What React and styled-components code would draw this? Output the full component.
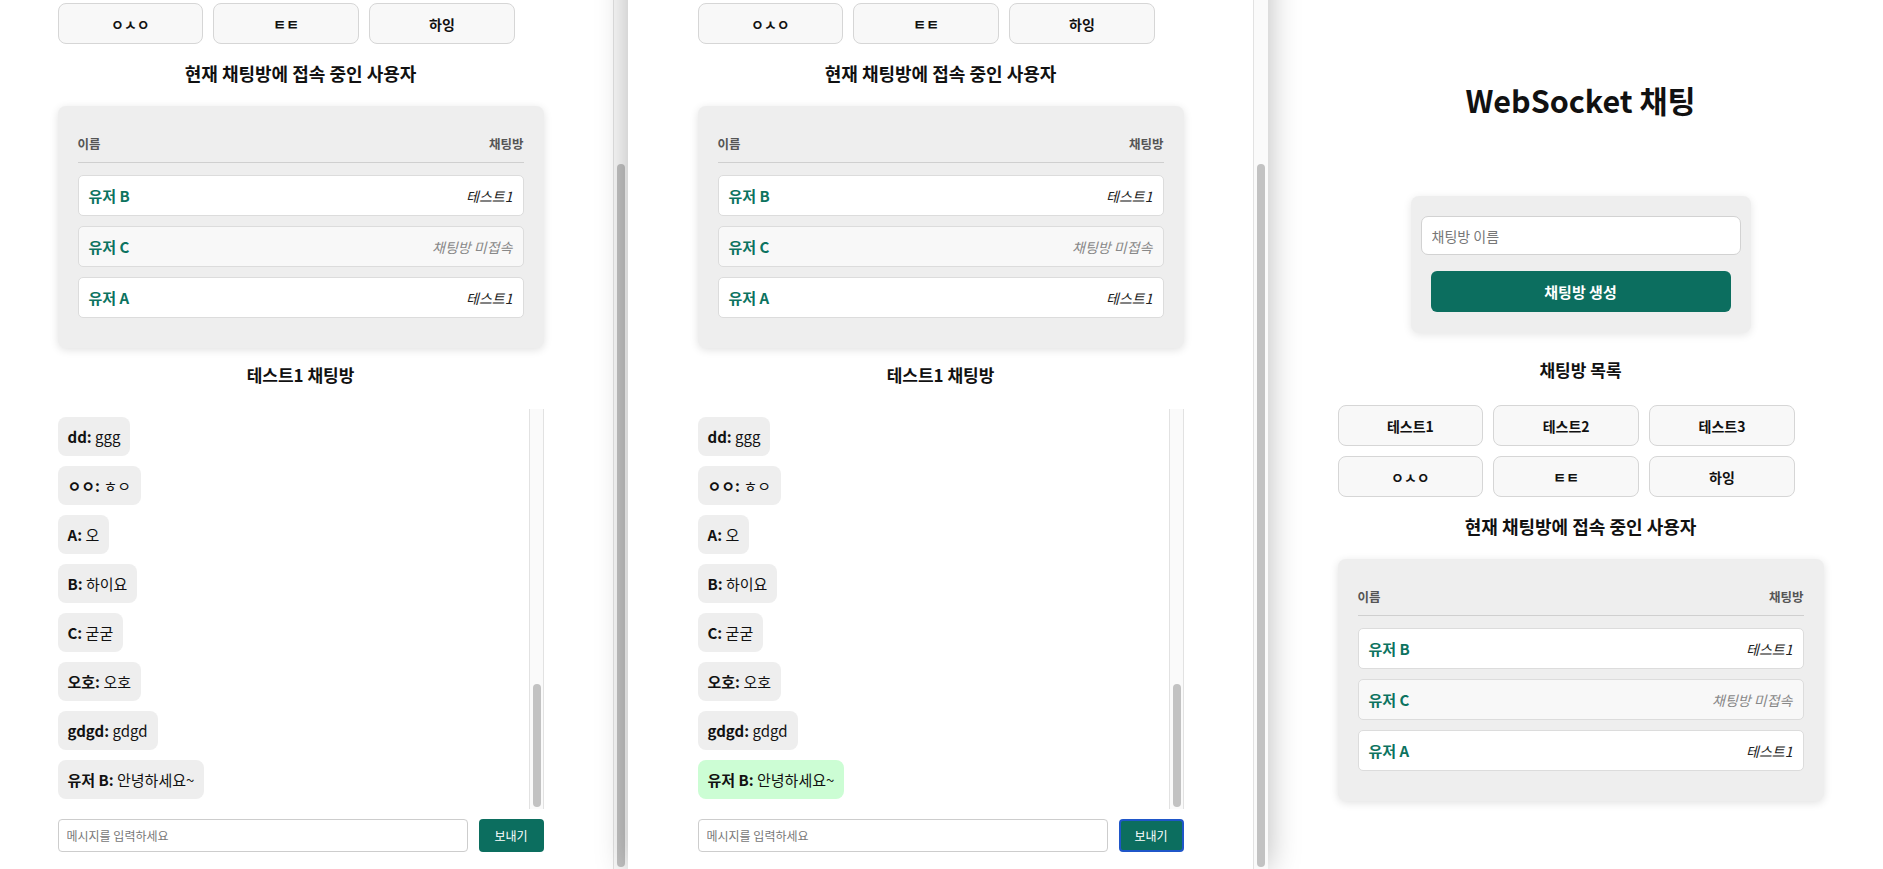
import React, { useLayoutEffect, useRef, useState } from "react";
import styled, { createGlobalStyle } from "styled-components";

const TEAL = "#0c6e5f";

const GlobalStyle = createGlobalStyle`
  html, body {
    margin: 0;
    padding: 0;
    overflow: hidden;
    background: #1c1c1e;
  }
  body {
    font-family: "Noto Sans CJK KR", "Noto Sans", sans-serif;
    color: #111;
  }
  * {
    box-sizing: border-box;
  }
`;

const Desktop = styled.div`
  display: flex;
  align-items: flex-start;
  width: calc(100% + 12px);
  height: 869px;
  margin-left: -12px;
  overflow: hidden;
`;

const WindowFrame = styled.section`
  position: relative;
  flex: 0 0 ${(p) => p.$width}px;
  height: ${(p) => p.$height}px;
  margin-top: ${(p) => p.$top}px;
  background: #fff;
  z-index: ${(p) => (p.$front ? 2 : 1)};
  box-shadow: ${(p) => (p.$front ? "0 0 30px rgba(0, 0, 0, 0.28)" : "none")};
  display: flex;
`;

/* scroll box with a mac style scrollbar rail next to it */
const ScrollBox = styled.div`
  display: flex;
  width: 100%;
  height: ${(p) => p.$height};
  flex-shrink: 0;
`;

const ScrollViewport = styled.div`
  flex: 1;
  min-width: 0;
  height: 100%;
  overflow-y: auto;
  overflow-x: hidden;
  scrollbar-width: none;
  &::-webkit-scrollbar {
    display: none;
  }
`;

const Rail = styled.div`
  position: relative;
  flex: 0 0 15px;
  height: 100%;
  background: #fafafa;
  border-left: 1px solid #e2e2e2;
  border-right: ${(p) => (p.$boxed ? "1px solid #e2e2e2" : "none")};
`;

const Thumb = styled.div`
  position: absolute;
  left: 3px;
  width: 8px;
  border-radius: 4px;
  background: #c2c2c2;
`;

const ScrollArea = ({ height, boxed, children }) => {
  const ref = useRef(null);
  const [thumb, setThumb] = useState(null);
  useLayoutEffect(() => {
    const el = ref.current;
    if (!el) return;
    const update = () => {
      el.scrollTop = el.scrollHeight;
      const { scrollTop, scrollHeight, clientHeight } = el;
      if (scrollHeight <= clientHeight) {
        setThumb(null);
        return;
      }
      setThumb({
        top: (scrollTop / scrollHeight) * clientHeight,
        height: (clientHeight * clientHeight) / scrollHeight,
      });
    };
    update();
    if (document.fonts) document.fonts.ready.then(update);
  }, []);
  return (
    <ScrollBox $height={height}>
      <ScrollViewport ref={ref}>{children}</ScrollViewport>
      <Rail $boxed={boxed}>
        {thumb && (
          <Thumb
            style={{ top: thumb.top + 1, height: Math.max(thumb.height - 3, 10) }}
          />
        )}
      </Rail>
    </ScrollBox>
  );
};

const Page = styled.main`
  width: 486px;
  margin: 0 auto;
  padding: 78px 0 17px;
  display: flex;
  flex-direction: column;
  align-items: center;
`;

const Title = styled.h1`
  margin: 0 0 74px;
  font-size: 30.5px;
  line-height: 44px;
  font-weight: 700;
`;

const CreateCard = styled.form`
  width: 340px;
  padding: 20px 10px 21px;
  background: #eee;
  border-radius: 8px;
  box-shadow: 0 2px 8px rgba(0, 0, 0, 0.1);
  display: flex;
  flex-direction: column;
  align-items: center;
  gap: 16px;
`;

const RoomNameInput = styled.input`
  width: 100%;
  height: 39px;
  padding: 0 10px;
  border: 1px solid #d2d2d2;
  border-radius: 7px;
  background: #fff;
  font: inherit;
  font-size: 14px;
  outline: none;
  &::placeholder {
    color: #777;
  }
`;

const CreateButton = styled.button`
  width: 300px;
  height: 41px;
  border: none;
  border-radius: 6px;
  background: ${TEAL};
  color: #fff;
  font: inherit;
  font-size: 15px;
  font-weight: 700;
`;

const Heading = styled.h2`
  margin: ${(p) => p.$margin};
  font-size: ${(p) => (p.$large ? 18 : 17)}px;
  line-height: ${(p) => (p.$large ? 28 : 24)}px;
  font-weight: 700;
  text-align: center;
`;

const RoomGrid = styled.div`
  width: 100%;
  display: flex;
  flex-wrap: wrap;
  gap: 10px;
`;

const RoomButton = styled.button`
  width: 30%;
  height: 41px;
  border: 1px solid #d6d6d6;
  border-radius: 8px;
  background: #f8f8f8;
  color: #111;
  font: inherit;
  font-size: 14px;
  font-weight: 700;
`;

const UserCard = styled.div`
  width: 100%;
  padding: 20px;
  background: #eee;
  border-radius: 8px;
  box-shadow: 0 2px 8px rgba(0, 0, 0, 0.12);
`;

const UserHeader = styled.div`
  display: flex;
  justify-content: space-between;
  padding: 8px 0;
  margin-bottom: 12px;
  border-bottom: 1px solid #cfcfcf;
  font-size: 12.5px;
  line-height: 20px;
  font-weight: 700;
  color: #555;
`;

const UserRow = styled.div`
  display: flex;
  justify-content: space-between;
  align-items: center;
  height: 41px;
  padding: 0 10px;
  margin-bottom: 10px;
  border: 1px solid #dcdcdc;
  border-radius: 5px;
  background: ${(p) => (p.$idle ? "#f8f8f8" : "#fff")};
`;

const UserName = styled.span`
  color: #0c7360;
  font-size: 15px;
  font-weight: 700;
`;

const UserRoom = styled.span`
  font-size: 14px;
  font-style: italic;
  color: ${(p) => (p.$idle ? "#888" : "#222")};
`;

const MessageStack = styled.div`
  display: flex;
  flex-direction: column;
  align-items: flex-start;
  gap: 10px;
  padding-bottom: 10px;
`;

const Bubble = styled.div`
  flex-shrink: 0;
  padding: 8px 10px;
  border-radius: 8px;
  background: ${(p) => (p.$mine ? "#ccfdd4" : "#eee")};
  font-size: 15px;
  line-height: 23px;
  strong {
    font-weight: 700;
  }
`;

const Composer = styled.form`
  width: 100%;
  margin-top: 10px;
  display: flex;
  gap: 11px;
`;

const MessageInput = styled.input`
  flex: 1;
  height: 33px;
  padding: 0 8px;
  border: 1px solid #cdcdcd;
  border-radius: 4px;
  font: inherit;
  font-size: 12px;
  outline: none;
  &::placeholder {
    color: #777;
  }
`;

const SendButton = styled.button`
  width: 65px;
  height: 33px;
  border: ${(p) => (p.$focused ? "2px solid #1f56c9" : "none")};
  border-radius: 4px;
  background: ${TEAL};
  color: #fff;
  font: inherit;
  font-size: 12px;
`;

const ROOMS = ["테스트1", "테스트2", "테스트3", "ㅇㅅㅇ", "ㅌㅌ", "하잉"];

const USERS = [
  { name: "유저 B", room: "테스트1" },
  { name: "유저 C", room: null },
  { name: "유저 A", room: "테스트1" },
];

const MESSAGES = [
  { from: "유저 A", text: "안녕하세요" },
  { from: "유저 C", text: "반가워요" },
  { from: "a", text: "aaa" },
  { from: "b", text: "bbb" },
  { from: "유저 A", text: "테스트" },
  { from: "test", text: "test" },
  { from: "ㅋㅋ", text: "ㅋㅋㅋ" },
  { from: "hi", text: "hello" },
  { from: "유저 C", text: "ㅎㅇ" },
  { from: "qwer", text: "asdf" },
  { from: "유저 A", text: "잘 되네요" },
  { from: "1", text: "11" },
  { from: "2", text: "22" },
  { from: "ㅁㅁ", text: "ㅁㅁㅁ" },
  { from: "zz", text: "zzz" },
  { from: "유저 C", text: "오오" },
  { from: "abc", text: "abc" },
  { from: "ㄴㄴ", text: "ㄴㄴ" },
  { from: "dd", text: "ggg" },
  { from: "ㅇㅇ", text: "ㅎㅇ" },
  { from: "A", text: "오" },
  { from: "B", text: "하이요" },
  { from: "C", text: "굳굳" },
  { from: "오호", text: "오호" },
  { from: "gdgd", text: "gdgd" },
  { from: "유저 B", text: "안녕하세요~" },
];

const ChatRoom = ({ me, focusSend }) => (
  <>
    <Heading $margin="15px 0 22px">테스트1 채팅방</Heading>
    <ScrollArea height="400px" boxed>
      <MessageStack>
        {MESSAGES.map((m, i) => (
          <Bubble key={i} $mine={m.from === me}>
            <strong>{m.from}:</strong> {m.text}
          </Bubble>
        ))}
      </MessageStack>
    </ScrollArea>
    <Composer onSubmit={(e) => e.preventDefault()}>
      <MessageInput placeholder="메시지를 입력하세요" />
      <SendButton type="submit" $focused={focusSend}>
        보내기
      </SendButton>
    </Composer>
  </>
);

const ChatApp = ({ inRoom, me, focusSend }) => (
  <Page>
    <Title>WebSocket 채팅</Title>
    <CreateCard onSubmit={(e) => e.preventDefault()}>
      <RoomNameInput placeholder="채팅방 이름" />
      <CreateButton type="submit">채팅방 생성</CreateButton>
    </CreateCard>
    <Heading $margin="25px 0 23px">채팅방 목록</Heading>
    <RoomGrid>
      {ROOMS.map((room) => (
        <RoomButton key={room} type="button">
          {room}
        </RoomButton>
      ))}
    </RoomGrid>
    <Heading $large $margin="15px 0 19px">
      현재 채팅방에 접속 중인 사용자
    </Heading>
    <UserCard>
      <UserHeader>
        <span>이름</span>
        <span>채팅방</span>
      </UserHeader>
      {USERS.map((u) => (
        <UserRow key={u.name} $idle={!u.room}>
          <UserName>{u.name}</UserName>
          <UserRoom $idle={!u.room}>{u.room || "채팅방 미접속"}</UserRoom>
        </UserRow>
      ))}
    </UserCard>
    {inRoom && <ChatRoom me={me} focusSend={focusSend} />}
  </Page>
);

export default function App() {
  return (
    <>
      <GlobalStyle />
      <Desktop>
        <WindowFrame $width={640} $height={966} $top={-97}>
          <ScrollArea height="100%">
            <ChatApp inRoom me="유저 A" />
          </ScrollArea>
        </WindowFrame>
        <WindowFrame $width={640} $height={966} $top={-97} $front>
          <ScrollArea height="100%">
            <ChatApp inRoom me="유저 B" focusSend />
          </ScrollArea>
        </WindowFrame>
        <WindowFrame $width={625} $height={869} $top={0}>
          <ChatApp me="유저 C" />
        </WindowFrame>
      </Desktop>
    </>
  );
}
